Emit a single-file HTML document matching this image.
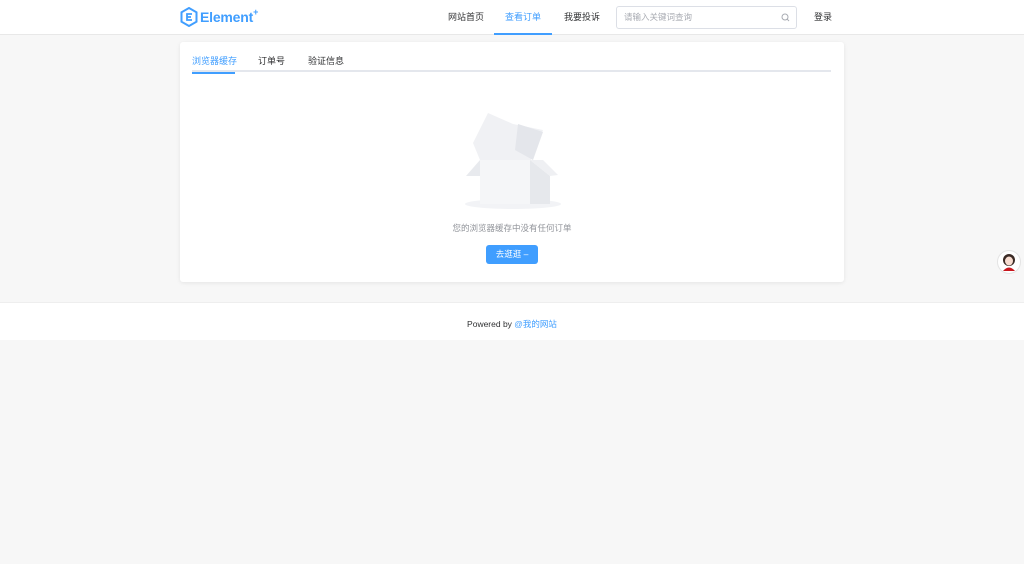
<!DOCTYPE html>
<html><head><meta charset="utf-8">
<style>
*{margin:0;padding:0;box-sizing:border-box}
body{width:1024px;height:564px;background:#f7f7f7;font-family:"Liberation Sans","Noto Sans CJK SC",sans-serif;position:relative;overflow:hidden;color:#303133;white-space:nowrap}
.hdr{position:absolute;left:0;top:0;width:1024px;height:35px;background:#fff;border-bottom:1px solid #e8e8e8}
.logo{position:absolute;left:180px;top:7px;display:flex;align-items:center;color:#409eff;font-size:14px;font-weight:600}
.nav{position:absolute;top:0;font-size:9px;line-height:34px;color:#303133}
.act{color:#409eff;border-bottom:2px solid #409eff;height:35px}
.search{position:absolute;left:616px;top:6px;width:181px;height:23px;border:1px solid #dcdfe6;border-radius:3px;font-size:8.5px;color:#a8abb2;padding-left:7px;line-height:21px}
.card{position:absolute;left:180px;top:42px;width:664px;height:240px;background:#fff;border-radius:3px;box-shadow:0 1px 4px rgba(0,0,0,.08)}
.tabs{position:absolute;left:12px;top:0;width:639px;height:30px;border-bottom:2px solid #e4e7ed;font-size:9px}
.tab{position:absolute;top:12px;white-space:nowrap}
.footer{position:absolute;left:0;top:302px;width:1024px;height:38px;background:#fff;border-top:1px solid #eee;text-align:center;font-size:8.5px;line-height:42px;color:#303133}
.btn{position:absolute;left:306px;top:203px;width:52px;height:19px;background:#409eff;border-radius:3px;color:#fff;font-size:8.5px;text-align:center;line-height:19px}
</style></head><body>
<div class="hdr">
 <div class="logo"><svg width="18" height="20" viewBox="0 0 18 20"><path d="M9 1L16.5 5.3V14.7L9 19L1.5 14.7V5.3Z" fill="none" stroke="#409eff" stroke-width="2"/><path d="M12 7H7V13H12M7 10H11" fill="none" stroke="#409eff" stroke-width="1.8"/></svg><span style="margin-left:2px;letter-spacing:-0.2px">Element</span><sup style="font-size:9px;position:relative;top:-5px">+</sup></div>
 <div class="nav" style="left:448px">网站首页</div>
 <div class="nav act" style="left:494px;width:58px;text-align:center">查看订单</div>
 <div class="nav" style="left:564px">我要投诉</div>
 <div class="search">请输入关键词查询<svg style="position:absolute;right:6px;top:6px" width="9" height="9" viewBox="0 0 9 9"><circle cx="4" cy="4" r="3" fill="none" stroke="#a8abb2"/><path d="M6.2 6.2L8 8" stroke="#a8abb2"/></svg></div>
 <div class="nav" style="left:814px">登录</div>
</div>
<div class="card">
 <div class="tabs">
  <div class="tab" style="left:0;color:#409eff;border-bottom:2px solid #409eff;height:20px;width:43px">浏览器缓存</div>
  <div class="tab" style="left:66px">订单号</div>
  <div class="tab" style="left:116px">验证信息</div>
 </div>
 <svg style="position:absolute;left:283px;top:68px" width="100" height="100" viewBox="0 0 100 100">
  <ellipse cx="50" cy="94" rx="48" ry="5" fill="#f2f3f6"/>
  <path d="M10 33L25 3L50 14L80 20L68 50H17Z" fill="#f0f1f4"/>
  <path d="M55 14L80 22L70 50L52 40Z" fill="#e4e6eb"/>
  <path d="M3 66L17 50V66Z" fill="#e8eaee"/>
  <rect x="17" y="50" width="50" height="44" fill="#f5f6f8"/>
  <path d="M67 50L87 66V94H67Z" fill="#e6e8ec"/>
  <path d="M67 50L80 50L95 65L87 66Z" fill="#eff0f3"/>
 </svg>
 <div style="position:absolute;left:0;top:180px;width:664px;text-align:center;font-size:8.5px;color:#909399">您的浏览器缓存中没有任何订单</div>
 <div class="btn">去逛逛 –</div>
</div>
<div class="footer">Powered by <span style="color:#409eff">@我的网站</span></div>
<svg style="position:absolute;left:997px;top:250px" width="24" height="24" viewBox="0 0 24 24"><circle cx="12" cy="12" r="11.5" fill="#fff" stroke="#e4e4e4"/><circle cx="12" cy="10" r="6" fill="#3a2a25"/><ellipse cx="12" cy="11" rx="4" ry="4.5" fill="#f7dcd0"/><path d="M6 21Q12 14 18 21Z" fill="#c8161d"/></svg>
</body></html>
